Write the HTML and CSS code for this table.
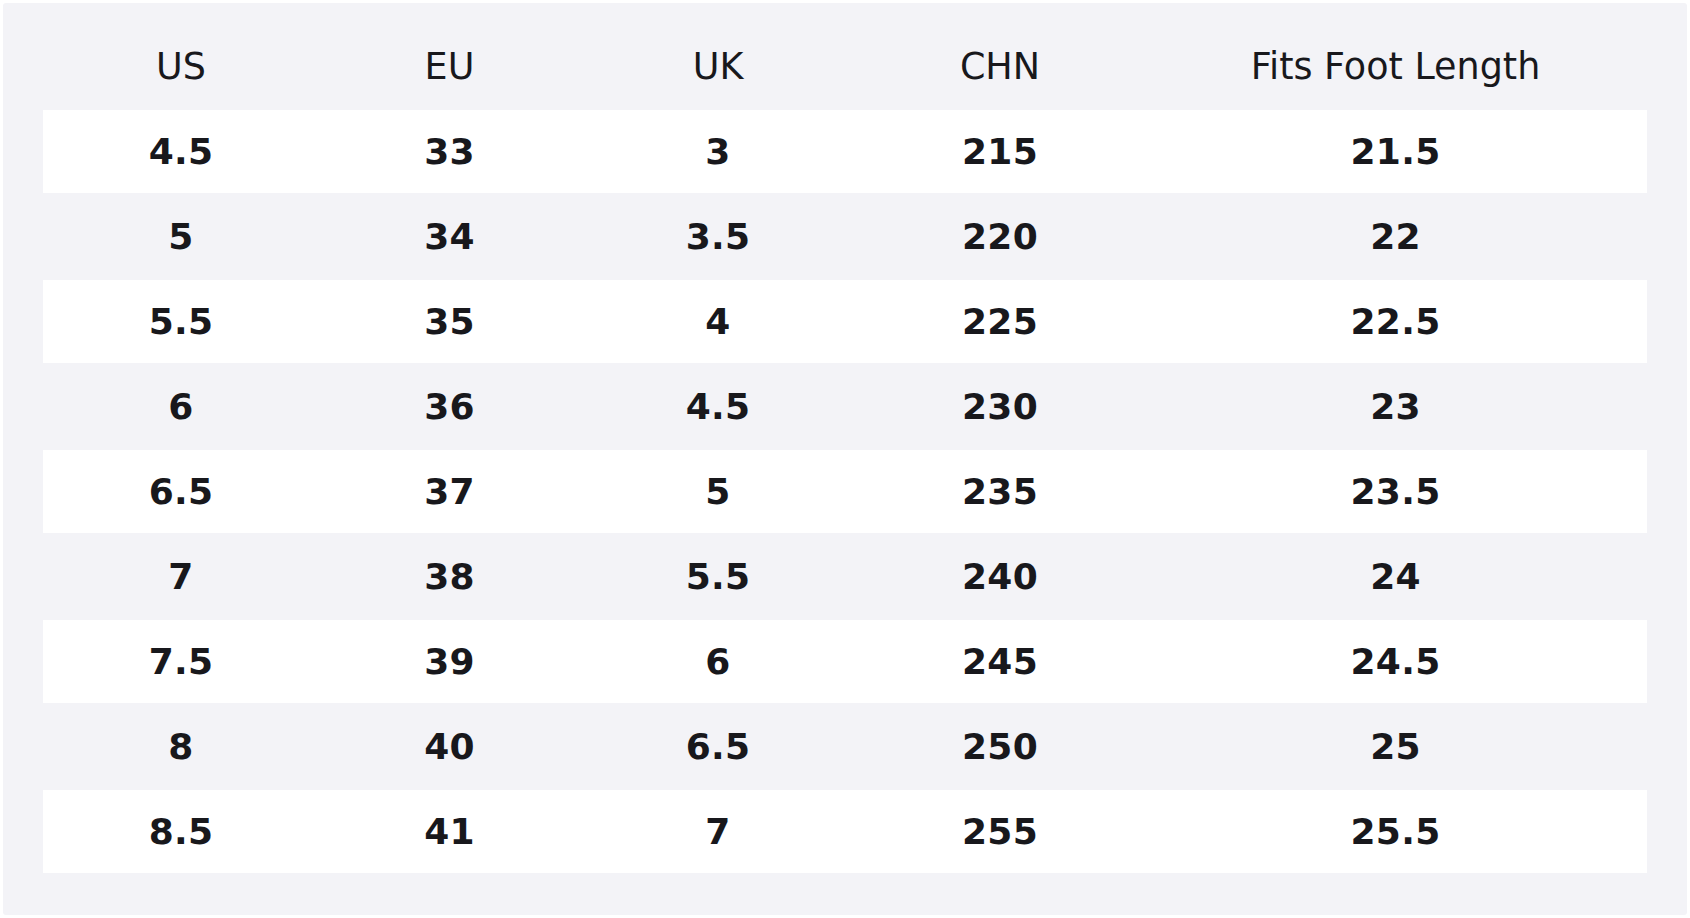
FILE: index.html
```html
<!DOCTYPE html>
<html lang="en">
<head>
<meta charset="utf-8">
<title>Size Chart</title>
<link rel="stylesheet" href="styles.css">
</head>
<body>
<div class="chart">
  <div class="row head">
    <div>US</div><div>EU</div><div>UK</div><div>CHN</div><div>Fits Foot Length</div>
  </div>
  <div class="row odd"><div>4.5</div><div>33</div><div>3</div><div>215</div><div>21.5</div></div>
  <div class="row even"><div>5</div><div>34</div><div>3.5</div><div>220</div><div>22</div></div>
  <div class="row odd"><div>5.5</div><div>35</div><div>4</div><div>225</div><div>22.5</div></div>
  <div class="row even"><div>6</div><div>36</div><div>4.5</div><div>230</div><div>23</div></div>
  <div class="row odd"><div>6.5</div><div>37</div><div>5</div><div>235</div><div>23.5</div></div>
  <div class="row even"><div>7</div><div>38</div><div>5.5</div><div>240</div><div>24</div></div>
  <div class="row odd"><div>7.5</div><div>39</div><div>6</div><div>245</div><div>24.5</div></div>
  <div class="row even"><div>8</div><div>40</div><div>6.5</div><div>250</div><div>25</div></div>
  <div class="row odd"><div>8.5</div><div>41</div><div>7</div><div>255</div><div>25.5</div></div>
</div>
</body>
</html>
```
FILE: styles.css
```css
html, body {
  margin: 0;
  padding: 0;
  background: #ffffff;
}
body {
  padding: 3px;
  font-family: "DejaVu Sans", sans-serif;
  color: #18181c;
}
.chart {
  box-sizing: border-box;
  width: 1684px;
  height: 912px;
  background: #f3f3f7;
  border-radius: 3px;
  padding: 19px 40px 42px;
  display: flex;
  flex-direction: column;
}
.row {
  display: grid;
  grid-template-columns: 276fr 261fr 276fr 288fr 503fr;
  align-items: center;
  text-align: center;
}
.head {
  height: 88px;
  font-size: 36.5px;
  font-weight: normal;
}
.odd,
.even {
  font-size: 36px;
  font-weight: bold;
  letter-spacing: 0.3px;
}
.odd {
  height: 83px;
  background: #ffffff;
}
.even {
  height: 87px;
}
```
